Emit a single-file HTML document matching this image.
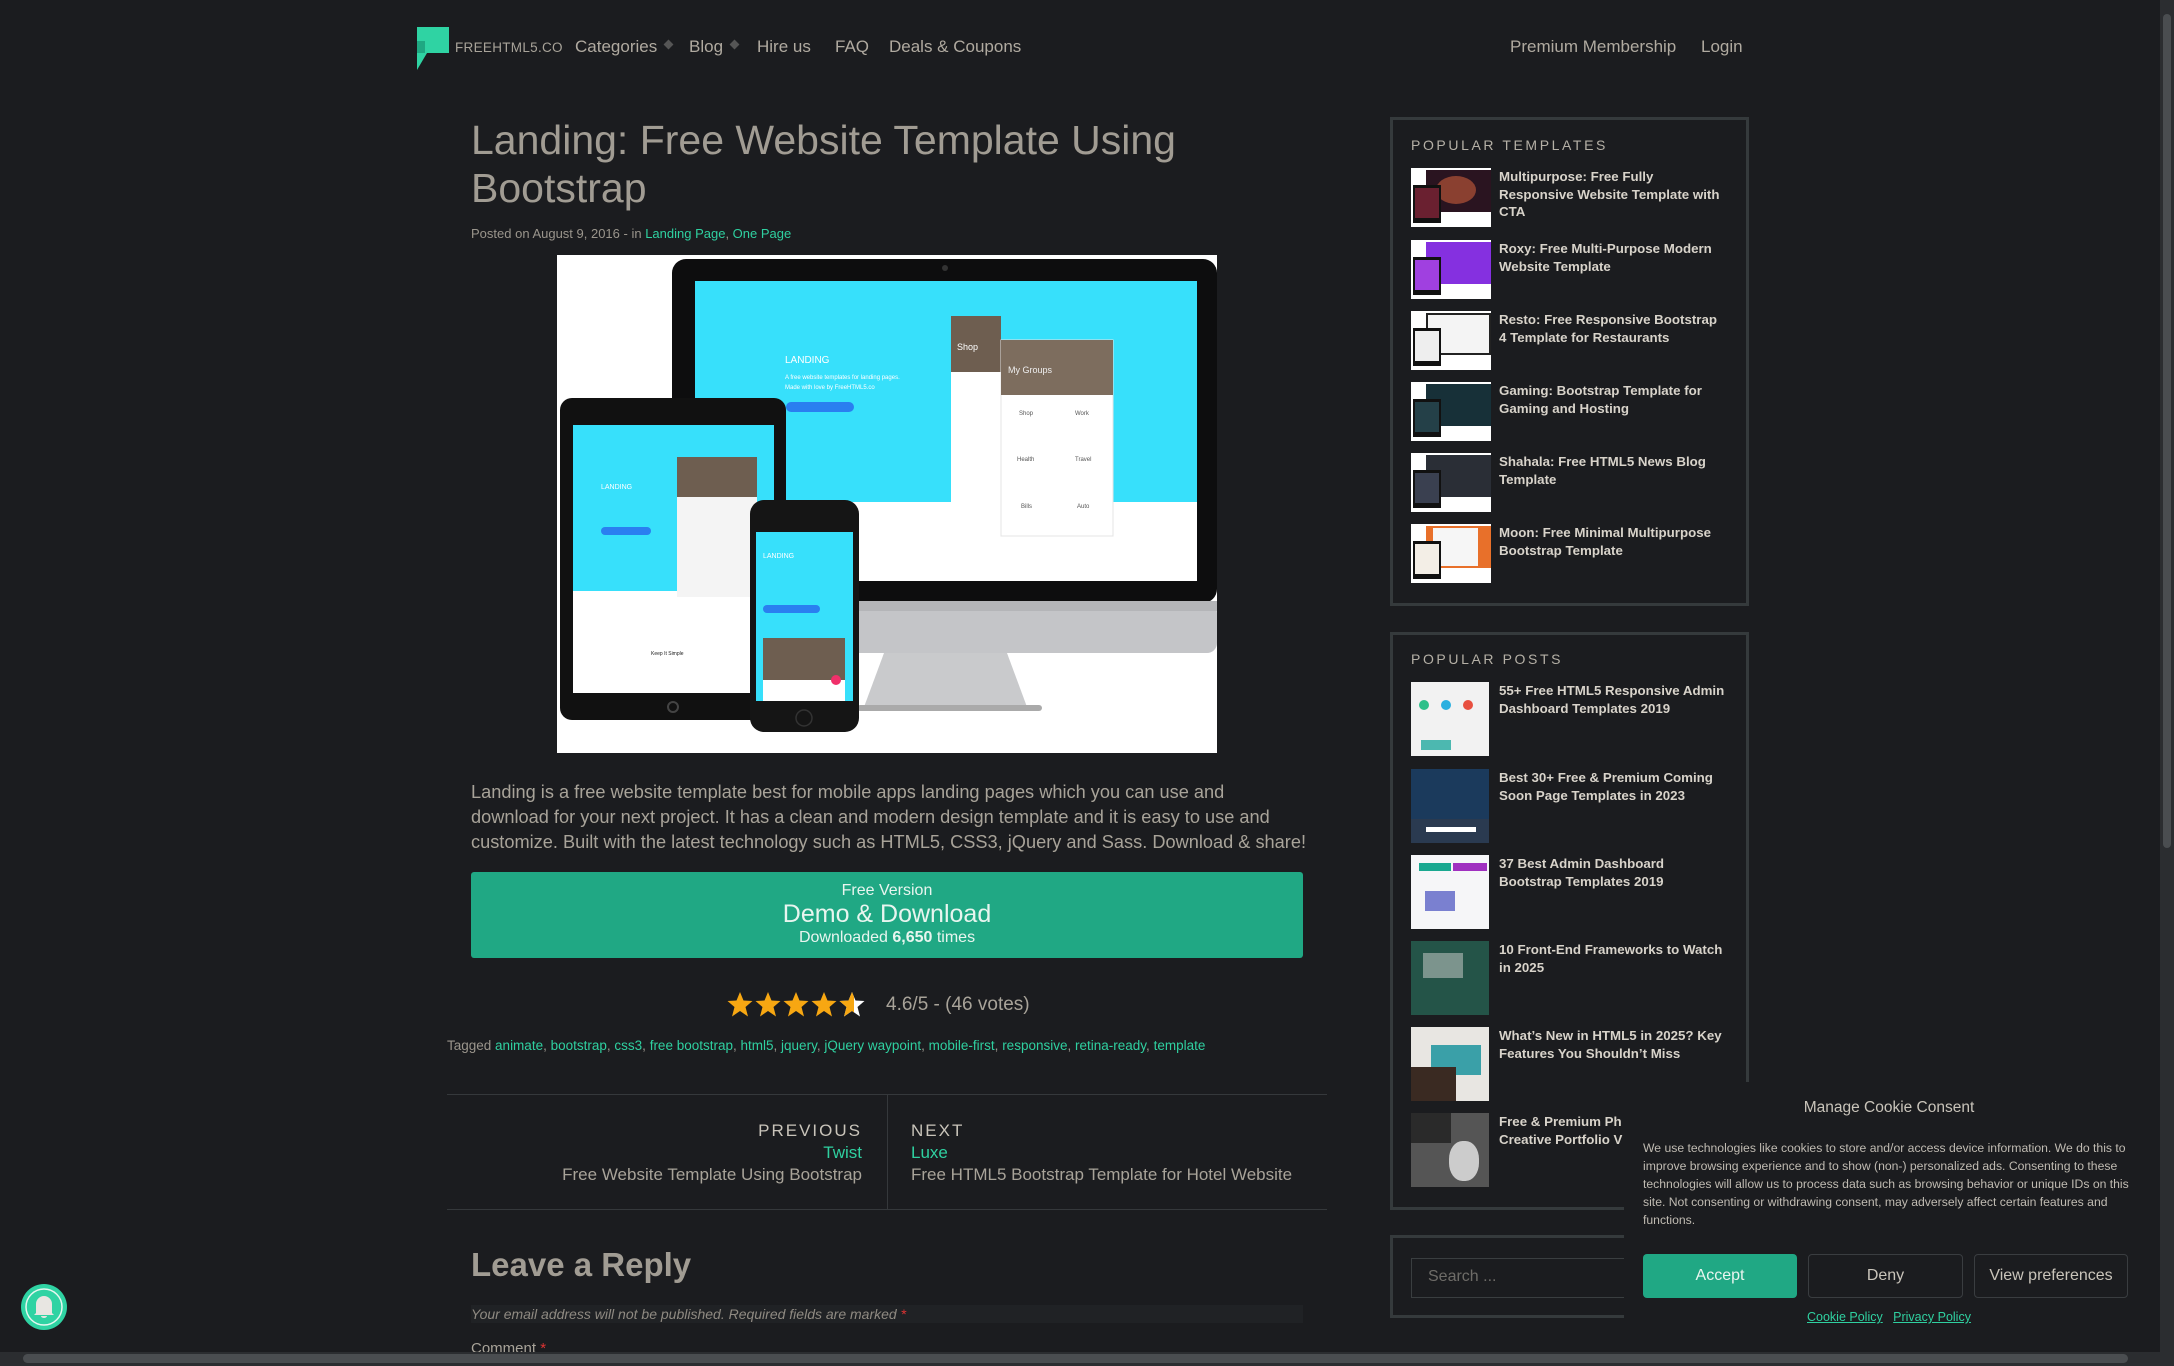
<!DOCTYPE html>
<html><head><meta charset="utf-8">
<style>
*{box-sizing:border-box;margin:0;padding:0}
body{width:2174px;height:1366px;overflow:hidden;background:#1b1c1f;font-family:"Liberation Sans",sans-serif;color:#a8a399;position:relative}
a{color:#2fd0a0;text-decoration:none}
.abs{position:absolute;white-space:nowrap}
.nav{font-size:17px;color:#b0aaa0;top:37px}
.dia{display:inline-block;width:7px;height:7px;background:#555;transform:rotate(45deg);margin-left:8px;vertical-align:4px}
.box{position:absolute;border:3px solid #353a3c;left:1390px;width:359px}
.bt{font-size:14px;letter-spacing:2.6px;color:#b5b0a6}
.it{position:absolute;left:18px;display:flex}
.th{width:80px;height:59px;position:relative;overflow:hidden;background:#fff;flex:none}
.itx{margin-left:8px;font-size:13.3px;font-weight:bold;color:#d8d3ca;line-height:17.7px;white-space:normal;width:228px}
.pt{width:78px;height:74px;flex:none;position:relative;overflow:hidden}
.it .pt + .itx{margin-left:10px;width:235px}
</style></head><body>

<!-- nav -->
<svg class="abs" style="left:417px;top:27px" width="32" height="43" viewBox="0 0 32 43"><polygon points="0,0 32,0 32,26 10,26 0,43 0,26 6,26 0,14" fill="#2fd3a3"/><polygon points="0,14 8,14 8,26 0,26" fill="#1fa882"/></svg>
<div class="abs" style="left:455px;top:40px;font-size:13.5px;color:#a8a399;letter-spacing:.3px">FREEHTML5.CO</div>
<div class="abs nav" style="left:575px">Categories<span class="dia"></span></div>
<div class="abs nav" style="left:689px">Blog<span class="dia"></span></div>
<div class="abs nav" style="left:757px">Hire us</div>
<div class="abs nav" style="left:835px">FAQ</div>
<div class="abs nav" style="left:889px">Deals &amp; Coupons</div>
<div class="abs nav" style="left:1510px">Premium Membership</div>
<div class="abs nav" style="left:1701px">Login</div>

<!-- title -->
<div class="abs" style="left:471px;top:116px;font-size:41px;line-height:48px;color:#a19c93">Landing: Free Website Template Using<br>Bootstrap</div>
<div class="abs" style="left:471px;top:226px;font-size:13px;color:#9a958c">Posted on August 9, 2016 - in <a>Landing Page</a>, <a>One Page</a></div>

<!-- hero image -->
<svg class="abs" style="left:557px;top:255px" width="660" height="498" viewBox="0 0 660 498">
<rect width="660" height="498" fill="#fff"/>
<rect x="115" y="4" width="545" height="344" rx="14" fill="#0d0d0e"/>
<circle cx="388" cy="13" r="3" fill="#333"/>
<rect x="138" y="26" width="502" height="300" fill="#fff"/>
<rect x="138" y="26" width="502" height="221" fill="#37e0fb"/>
<text x="228" y="108" font-size="10" fill="#fff" font-family="Liberation Sans">LANDING</text>
<text x="228" y="124" font-size="6" fill="#fff" font-family="Liberation Sans">A free website templates for landing pages.</text>
<text x="228" y="134" font-size="6" fill="#fff" font-family="Liberation Sans">Made with love by FreeHTML5.co</text>
<rect x="229" y="147" width="68" height="10" rx="5" fill="#2a7ff0"/>
<rect x="394" y="61" width="50" height="196" fill="#fff"/>
<rect x="394" y="61" width="50" height="56" fill="#6e5e50"/>
<text x="400" y="95" font-size="9" fill="#fff" font-family="Liberation Sans">Shop</text>
<rect x="444" y="85" width="112" height="196" fill="#fff" stroke="#e4e4e4"/>
<rect x="444" y="85" width="112" height="55" fill="#7d6d5e"/>
<text x="451" y="118" font-size="9" fill="#eee" font-family="Liberation Sans">My Groups</text>
<g font-size="6" fill="#555" font-family="Liberation Sans"><text x="462" y="160">Shop</text><text x="518" y="160">Work</text><text x="460" y="206">Health</text><text x="518" y="206">Travel</text><text x="464" y="253">Bills</text><text x="520" y="253">Auto</text></g>
<rect x="115" y="348" width="545" height="50" rx="10" fill="#c4c5c8"/>
<rect x="115" y="346" width="545" height="10" fill="#b4b5b8"/>
<polygon points="327,398 450,398 470,452 307,452" fill="#c9cacc"/>
<rect x="300" y="450" width="185" height="6" rx="3" fill="#aaa"/>
<rect x="3" y="143" width="226" height="322" rx="12" fill="#111"/>
<rect x="16" y="170" width="201" height="268" fill="#fff"/>
<rect x="16" y="170" width="201" height="166" fill="#37e0fb"/>
<text x="44" y="234" font-size="7" fill="#fff" font-family="Liberation Sans">LANDING</text>
<rect x="44" y="272" width="50" height="8" rx="4" fill="#2a7ff0"/>
<rect x="120" y="202" width="80" height="140" fill="#f4f4f4"/>
<rect x="120" y="202" width="80" height="40" fill="#6e5e50"/>
<text x="94" y="400" font-size="5" fill="#222" font-family="Liberation Sans">Keep It Simple</text>
<circle cx="116" cy="452" r="5" fill="none" stroke="#444" stroke-width="2"/>
<rect x="193" y="245" width="109" height="232" rx="14" fill="#151515"/>
<rect x="199" y="277" width="97" height="169" fill="#37e0fb"/>
<text x="206" y="303" font-size="7" fill="#fff" font-family="Liberation Sans">LANDING</text>
<rect x="206" y="350" width="57" height="8" rx="4" fill="#2a7ff0"/>
<rect x="206" y="383" width="82" height="63" fill="#fff"/>
<rect x="206" y="383" width="82" height="42" fill="#6e5e50"/>
<circle cx="279" cy="425" r="5" fill="#f0306a"/>
<circle cx="247" cy="463" r="8" fill="none" stroke="#333" stroke-width="1.5"/>
</svg>

<!-- paragraph -->
<div class="abs" style="left:471px;top:780px;font-size:18.2px;line-height:25px;color:#a8a399">Landing is a free website template best for mobile apps landing pages which you can use and<br>download for your next project. It has a clean and modern design template and it is easy to use and<br>customize. Built with the latest technology such as HTML5, CSS3, jQuery and Sass. Download &amp; share!</div>

<!-- button -->
<div class="abs" style="left:471px;top:872px;width:832px;height:86px;background:#20a884;border-radius:3px;text-align:center;color:#e8f5ef">
<div style="font-size:16px;margin-top:10px">Free Version</div>
<div style="font-size:25px;line-height:29px">Demo &amp; Download</div>
<div style="font-size:16px">Downloaded <b>6,650</b> times</div>
</div>

<!-- rating -->
<svg class="abs" style="left:727px;top:991px" width="145" height="28" viewBox="0 0 145 28">
<defs><polygon id="s" points="13,1 16.5,9.5 25.5,10 18.5,16 21,25.5 13,20 5,25.5 7.5,16 0.5,10 9.5,9.5"/>
<clipPath id="h"><rect x="0" y="0" width="15" height="28"/></clipPath></defs>
<use href="#s" fill="#f7a712"/><use href="#s" x="28" fill="#f7a712"/><use href="#s" x="56" fill="#f7a712"/><use href="#s" x="84" fill="#f7a712"/>
<g transform="translate(112,0)"><use href="#s" fill="#fff"/><use href="#s" fill="#f7a712" clip-path="url(#h)"/></g>
</svg>
<div class="abs" style="left:886px;top:994px;font-size:19px;color:#a8a399">4.6/5 - (46 votes)</div>

<div class="abs" style="left:447px;top:1038px;font-size:13.5px;color:#9a958c">Tagged <a>animate</a>, <a>bootstrap</a>, <a>css3</a>, <a>free bootstrap</a>, <a>html5</a>, <a>jquery</a>, <a>jQuery waypoint</a>, <a>mobile-first</a>, <a>responsive</a>, <a>retina-ready</a>, <a>template</a></div>

<!-- prev next -->
<div class="abs" style="left:447px;top:1094px;width:880px;height:1px;background:#35383b"></div>
<div class="abs" style="left:447px;top:1209px;width:880px;height:1px;background:#35383b"></div>
<div class="abs" style="left:887px;top:1094px;width:1px;height:115px;background:#35383b"></div>
<div class="abs" style="right:1312px;top:1120px;text-align:right;font-size:17px;line-height:22px">
<div style="letter-spacing:2px;color:#c9c4ba">PREVIOUS</div><div><a>Twist</a></div><div style="color:#a8a399">Free Website Template Using Bootstrap</div></div>
<div class="abs" style="left:911px;top:1120px;font-size:17px;line-height:22px">
<div style="letter-spacing:2px;color:#c9c4ba">NEXT</div><div><a>Luxe</a></div><div style="color:#a8a399">Free HTML5 Bootstrap Template for Hotel Website</div></div>

<div class="abs" style="left:471px;top:1246px;font-size:33px;font-weight:bold;color:#a19c93">Leave a Reply</div>
<div class="abs" style="left:471px;top:1305px;width:832px;height:18px;background:#202225"></div>
<div class="abs" style="left:471px;top:1306px;font-size:14px;font-style:italic;color:#8f8a82">Your email address will not be published. Required fields are marked <span style="color:#d33">*</span></div>
<div class="abs" style="left:471px;top:1340px;font-size:15px;color:#a8a399">Comment <span style="color:#d33">*</span></div>

<!-- sidebar box1 -->
<div class="box" style="top:117px;height:489px">
<div class="abs bt" style="left:18px;top:17px">POPULAR TEMPLATES</div>
<div class="it" style="top:48px"><div class="th"><div style="position:absolute;left:15px;top:2px;width:65px;height:42px;background:#2a1420"></div><div style="position:absolute;left:25px;top:8px;width:40px;height:28px;background:#8a4030;border-radius:50%"></div><div style="position:absolute;left:2px;top:17px;width:28px;height:38px;background:#111"></div><div style="position:absolute;left:4px;top:20px;width:24px;height:30px;background:#6a2030"></div></div><div class="itx">Multipurpose: Free Fully Responsive Website Template with CTA</div></div>
<div class="it" style="top:120px"><div class="th"><div style="position:absolute;left:15px;top:2px;width:65px;height:42px;background:#8530e0"></div><div style="position:absolute;left:2px;top:17px;width:28px;height:38px;background:#111"></div><div style="position:absolute;left:4px;top:20px;width:24px;height:30px;background:#a040e0"></div></div><div class="itx">Roxy: Free Multi-Purpose Modern Website Template</div></div>
<div class="it" style="top:191px"><div class="th"><div style="position:absolute;left:15px;top:2px;width:65px;height:42px;background:#222"></div><div style="position:absolute;left:17px;top:4px;width:61px;height:38px;background:#f4f4f4"></div><div style="position:absolute;left:2px;top:17px;width:28px;height:38px;background:#111"></div><div style="position:absolute;left:4px;top:20px;width:24px;height:30px;background:#eee"></div></div><div class="itx">Resto: Free Responsive Bootstrap 4 Template for Restaurants</div></div>
<div class="it" style="top:262px"><div class="th"><div style="position:absolute;left:15px;top:2px;width:65px;height:42px;background:#173038"></div><div style="position:absolute;left:2px;top:17px;width:28px;height:38px;background:#111"></div><div style="position:absolute;left:4px;top:20px;width:24px;height:30px;background:#244048"></div></div><div class="itx">Gaming: Bootstrap Template for Gaming and Hosting</div></div>
<div class="it" style="top:333px"><div class="th"><div style="position:absolute;left:15px;top:2px;width:65px;height:42px;background:#2a2e36"></div><div style="position:absolute;left:2px;top:17px;width:28px;height:38px;background:#111"></div><div style="position:absolute;left:4px;top:20px;width:24px;height:30px;background:#3a4050"></div></div><div class="itx">Shahala: Free HTML5 News Blog Template</div></div>
<div class="it" style="top:404px"><div class="th"><div style="position:absolute;left:15px;top:2px;width:65px;height:42px;background:#e8702a"></div><div style="position:absolute;left:22px;top:4px;width:45px;height:38px;background:#f6f6f6"></div><div style="position:absolute;left:2px;top:17px;width:28px;height:38px;background:#111"></div><div style="position:absolute;left:4px;top:20px;width:24px;height:30px;background:#f3eee6"></div></div><div class="itx">Moon: Free Minimal Multipurpose Bootstrap Template</div></div>
</div>

<!-- sidebar box2 -->
<div class="box" style="top:632px;height:578px">
<div class="abs bt" style="left:18px;top:16px">POPULAR POSTS</div>
<div class="it" style="top:47px"><div class="pt" style="background:#f2f2f2"><div style="position:absolute;left:8px;top:18px;width:10px;height:10px;border-radius:50%;background:#2ec08a"></div><div style="position:absolute;left:30px;top:18px;width:10px;height:10px;border-radius:50%;background:#2ab0e0"></div><div style="position:absolute;left:52px;top:18px;width:10px;height:10px;border-radius:50%;background:#e85040"></div><div style="position:absolute;left:10px;top:58px;width:30px;height:10px;background:#4cb8b0"></div></div><div class="itx">55+ Free HTML5 Responsive Admin Dashboard Templates 2019</div></div>
<div class="it" style="top:134px"><div class="pt" style="background:#1b3a5c"><div style="position:absolute;left:0;top:50px;width:78px;height:24px;background:#2a3a50"></div><div style="position:absolute;left:15px;top:58px;width:50px;height:5px;background:#fff"></div></div><div class="itx">Best 30+ Free &amp; Premium Coming Soon Page Templates in 2023</div></div>
<div class="it" style="top:220px"><div class="pt" style="background:#f6f6f8"><div style="position:absolute;left:8px;top:8px;width:32px;height:8px;background:#1aa890"></div><div style="position:absolute;left:42px;top:8px;width:34px;height:8px;background:#a030c0"></div><div style="position:absolute;left:14px;top:36px;width:30px;height:20px;background:#7a80d0"></div></div><div class="itx">37 Best Admin Dashboard<br>Bootstrap Templates 2019</div></div>
<div class="it" style="top:306px"><div class="pt" style="background:#245448"><div style="position:absolute;left:12px;top:12px;width:40px;height:25px;background:#b8c0bc;opacity:.6"></div></div><div class="itx">10 Front-End Frameworks to Watch<br>in 2025</div></div>
<div class="it" style="top:392px"><div class="pt" style="background:#e8e6e2"><div style="position:absolute;left:20px;top:18px;width:50px;height:30px;background:#3aa0a8"></div><div style="position:absolute;left:0;top:40px;width:45px;height:34px;background:#3a2a22"></div></div><div class="itx">What’s New in HTML5 in 2025? Key Features You Shouldn’t Miss</div></div>
<div class="it" style="top:478px"><div class="pt" style="background:#555"><div style="position:absolute;left:38px;top:28px;width:30px;height:40px;border-radius:45%;background:#ccc"></div><div style="position:absolute;left:0;top:0;width:40px;height:30px;background:#2a2a2a"></div></div><div class="itx">Free &amp; Premium Ph<br>Creative Portfolio V</div></div>
</div>

<!-- search -->
<div class="box" style="top:1235px;height:83px">
<div class="abs" style="left:18px;top:20px;width:330px;height:40px;border:1px solid #3a3e40;font-size:16px;color:#6e6c68;padding:9px 16px">Search ...</div>
</div>

<!-- cookie -->
<div class="abs" style="left:1624px;top:1082px;width:530px;height:270px;background:#1b1c1f">
<div style="text-align:center;margin-top:17px;font-size:15.5px;color:#c9c4ba">Manage Cookie Consent</div>
<div style="position:absolute;left:19px;top:57px;width:495px;white-space:normal;font-size:12.2px;line-height:18px;color:#c0bbb2">We use technologies like cookies to store and/or access device information. We do this to improve browsing experience and to show (non-) personalized ads. Consenting to these technologies will allow us to process data such as browsing behavior or unique IDs on this site. Not consenting or withdrawing consent, may adversely affect certain features and functions.</div>
<div style="position:absolute;left:19px;top:172px;width:154px;height:44px;background:#20a884;border-radius:4px;color:#e8f5ef;font-size:16px;text-align:center;line-height:44px">Accept</div>
<div style="position:absolute;left:184px;top:172px;width:155px;height:44px;border:1px solid #3a3d40;border-radius:4px;color:#c9c4ba;font-size:16px;text-align:center;line-height:42px">Deny</div>
<div style="position:absolute;left:350px;top:172px;width:154px;height:44px;border:1px solid #3a3d40;border-radius:4px;color:#c9c4ba;font-size:16px;text-align:center;line-height:42px">View preferences</div>
<div style="position:absolute;left:183px;top:228px;font-size:12.5px"><a style="text-decoration:underline">Cookie Policy</a>&nbsp;&nbsp;&nbsp;<a style="text-decoration:underline">Privacy Policy</a></div>
</div>

<!-- bell -->
<svg class="abs" style="left:20px;top:1283px" width="48" height="48" viewBox="0 0 48 48"><circle cx="24" cy="24" r="23" fill="#2fd3a3"/><circle cx="24" cy="24" r="18" fill="none" stroke="#e6f7f0" stroke-width="1.5"/><path d="M16 30 V21 a8 8 0 0 1 16 0 V30 l2 2 H14 Z" fill="#e8e6e2"/><path d="M21 33 h6 a3 2 0 0 1 -6 0Z" fill="#e8e6e2"/></svg>

<!-- scrollbars -->
<div class="abs" style="left:0;top:1352px;width:2174px;height:14px;background:#2b2d30"></div>
<div class="abs" style="left:23px;top:1354px;width:2105px;height:9px;border-radius:5px;background:#4a4d50"></div>
<div class="abs" style="left:2160px;top:0;width:14px;height:1352px;background:#2b2d30"></div>
<div class="abs" style="left:2163px;top:14px;width:8px;height:834px;border-radius:4px;background:#4a4d50"></div>
</body></html>
